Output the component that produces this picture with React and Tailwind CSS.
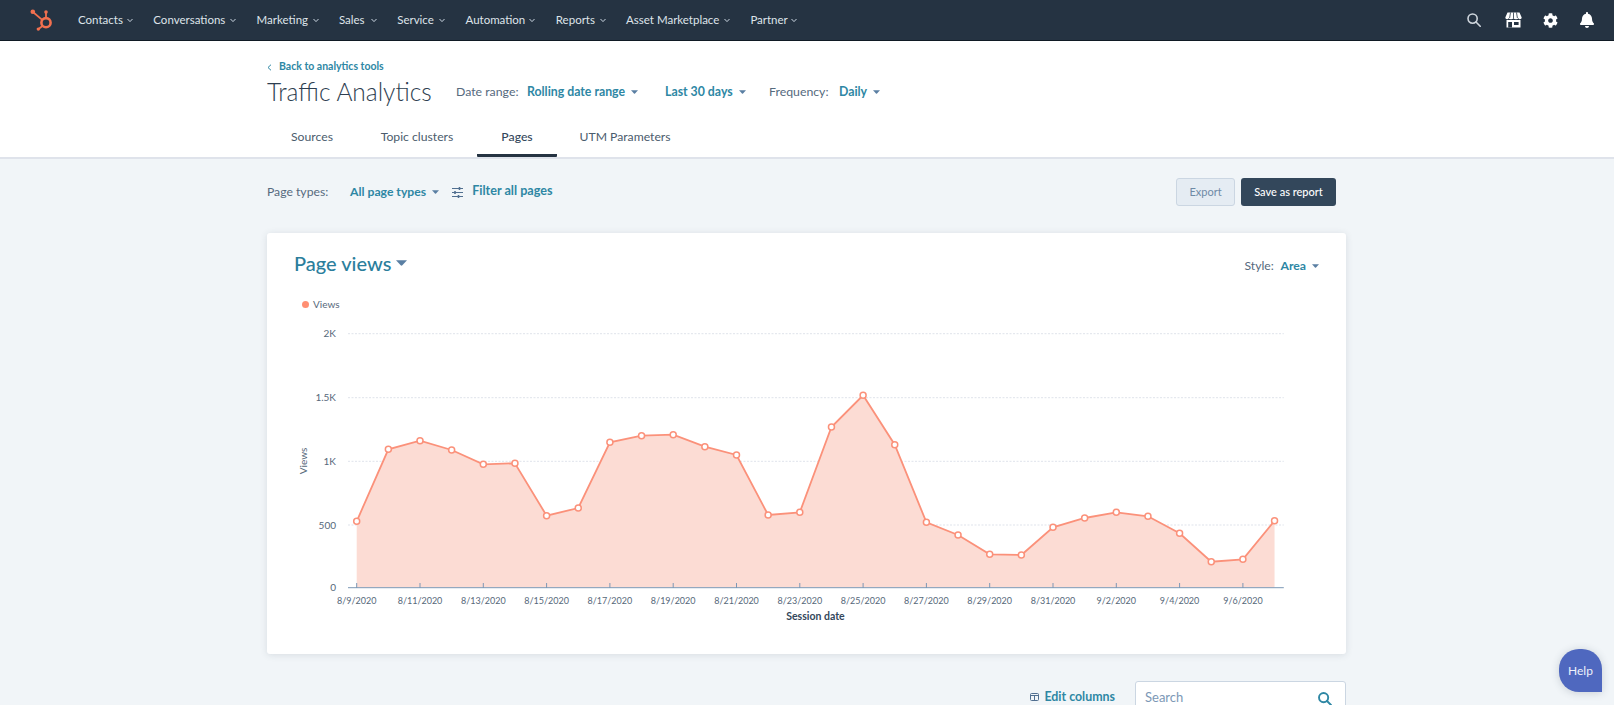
import React from "react";
import { FaCog, FaBell } from "react-icons/fa";

const nav = [
  ["Contacts", "w-[44px]"],
  ["Conversations", "w-[72px]"],
  ["Marketing", "w-[51px]"],
  ["Sales", "w-[27px]"],
  ["Service", "w-[37px]"],
  ["Automation", "w-[59px]"],
  ["Reports", "w-[39px]"],
  ["Asset Marketplace", "w-[93px]"],
  ["Partner", "w-[36px]"],
];

const tabs = [
  ["Sources", "w-[90px]"],
  ["Topic clusters", "w-[120px]"],
  ["Pages", "w-[80px]"],
  ["UTM Parameters", "w-[136px]"],
];

const ys = [521.3,449.3,440.7,450,464.3,463.3,515.7,508,442.3,435.7,434.7,446.7,455,515,512.3,427,395.3,444.7,522.3,535,554.3,555,527.3,518,512.3,516.3,533.3,561.7,559.3,520.7];
const pts = ys.map((y, i) => [356.7 + 31.65 * i, y]);
const line = pts.map((p) => p.join(",")).join(" ");
const area = `356.7,587.5 ${line} ${pts[29][0]},587.5`;
const xLabels = ["8/9/2020","8/11/2020","8/13/2020","8/15/2020","8/17/2020","8/19/2020","8/21/2020","8/23/2020","8/25/2020","8/27/2020","8/29/2020","8/31/2020","9/2/2020","9/4/2020","9/6/2020"];
const grid = [[333.7,"2K"],[397.7,"1.5K"],[461.3,"1K"],[525,"500"]];

function Chevron() {
  return (
    <svg width="6" height="5" viewBox="0 0 6 5" className="shrink-0">
      <path d="M0.5 1 L3 3.6 L5.5 1" fill="none" stroke="#cbd6e2" strokeWidth="1" />
    </svg>
  );
}

function Caret({ w = 7, h = 4, color = "#5a7fa3" }) {
  return (
    <svg width={w} height={h} viewBox="0 0 8 4" className="shrink-0">
      <path d="M0 0 H8 L4.6 3.7 Q4 4.2 3.4 3.7 Z" fill={color} />
    </svg>
  );
}

function Logo() {
  return (
    <svg width="24" height="26" viewBox="0 0 24 26" fill="none">
      <circle cx="17" cy="16.2" r="4.6" stroke="#f2704f" strokeWidth="2.6" />
      <path d="M17 11 V6" stroke="#f2704f" strokeWidth="1.8" />
      <circle cx="17" cy="5.6" r="1.8" fill="#f2704f" />
      <path d="M13.2 13.4 L4.5 6" stroke="#f2704f" strokeWidth="1.7" />
      <circle cx="3.8" cy="5.2" r="2.3" fill="#f2704f" />
      <path d="M13.5 19.5 L9.5 22.5" stroke="#f2704f" strokeWidth="1.7" />
      <circle cx="9.3" cy="22.6" r="1.7" fill="#f2704f" />
    </svg>
  );
}

function StoreIcon() {
  return (
    <svg width="17" height="16" viewBox="0 0 17 16">
      <path d="M2.5 0.5 H14.5 L16.7 5.6 Q16.7 7.2 15 7.2 Q13.4 7.2 13.3 6 Q13 7.2 11 7.2 Q9 7.2 8.5 6 Q8 7.2 6 7.2 Q4 7.2 3.7 6 Q3.6 7.2 2 7.2 Q0.3 7.2 0.3 5.6 Z" fill="#fff" />
      <path d="M5.5 0.5 L4.6 6 M8.5 0.5 V6 M11.5 0.5 L12.4 6" stroke="#253342" strokeWidth="0.8" />
      <path d="M1.5 8 H15.5 V15.5 H1.5 Z" fill="#fff" />
      <path d="M3.2 10 H7 V15.5 H3.2 Z M9 10 H13.6 V13 H9 Z" fill="#253342" />
    </svg>
  );
}

function Dropdown({ children, className = "" }) {
  return (
    <span className={`flex items-center gap-[6px] font-bold text-[#2e87a4] ${className}`}>
      {children}
      <Caret />
    </span>
  );
}

function SearchIcon({ size = 14, color = "#cfd6dd", width = 1.6 }) {
  return (
    <svg width={size} height={size} viewBox="0 0 14 14" fill="none" stroke={color} strokeWidth={width}>
      <circle cx="5.6" cy="5.6" r="4.6" />
      <path d="M9 9 L13.2 13.2" strokeLinecap="round" />
    </svg>
  );
}

export default function App() {
  return (
    <div className="relative h-[705px] w-full overflow-hidden bg-[#f1f5f8] font-['Lato',sans-serif] text-[#33475b]">
      <header className="flex h-[41px] items-center border-b border-[#101a24] bg-[#253342] pl-[29px] text-[11.5px] text-[#dfe4ea]">
        <span className="mr-[25px] flex w-[24px] -translate-y-[0.5px]"><Logo /></span>
        <nav className="flex items-center gap-[20.3px]">
          {nav.map(([label, w]) => (
            <span key={label} className="flex items-center gap-[5px]">
              <span className={`${w} whitespace-nowrap`}>{label}</span>
              <Chevron />
            </span>
          ))}
        </nav>
        <div className="ml-auto flex items-center pr-[19px]">
          <SearchIcon />
          <span className="ml-[24px] flex"><StoreIcon /></span>
          <FaCog className="ml-[21px] text-[15px] text-white" />
          <FaBell className="ml-[21px] text-[16px] text-white" />
        </div>
      </header>

      <section className="border-b-2 border-[#dfe3eb] bg-white pl-[267px] pt-[18px]">
        <div className="flex h-[16px] items-center gap-[6px] text-[10.5px] font-bold text-[#2e87a4]">
          <svg width="5" height="7" viewBox="0 0 5 7"><path d="M4 0.7 L1 3.5 L4 6.3" fill="none" stroke="#2e87a4" strokeWidth="1" /></svg>
          <span className="ml-[1px]">Back to analytics tools</span>
        </div>
        <div className="flex h-[34px] items-center text-[12.3px]">
          <h1 className="w-[189px] text-[24.5px] font-light leading-none text-[#2d3e50]">Traffic Analytics</h1>
          <span className="w-[71px] text-[#566a7e]">Date range:</span>
          <Dropdown className="w-[138px]">Rolling date range</Dropdown>
          <Dropdown className="w-[104px]">Last 30 days</Dropdown>
          <span className="w-[70px] text-[#566a7e]">Frequency:</span>
          <Dropdown>Daily</Dropdown>
        </div>
        <div className="mt-[9px] flex h-[39px] text-[12.2px] text-[#4b5c6d]">
          {tabs.map(([t, w]) => (
            <span
              key={t}
              className={`flex items-center justify-center border-b-[3px] pt-[2px] ${w} ${t === "Pages" ? "rounded-[1px] border-[#253342] font-medium text-[#33475b]" : "border-transparent"}`}
            >
              {t}
            </span>
          ))}
        </div>
      </section>

      <main className="ml-[267px] w-[1079px]">
        <div className="flex items-center pb-[27px] pr-[10px] pt-[19px] text-[12.2px]">
          <span className="w-[83px] text-[#566a7e]">Page types:</span>
          <Dropdown>All page types</Dropdown>
          <svg width="11" height="11" viewBox="0 0 11 11" className="ml-[13px]" stroke="#516f90" strokeWidth="1">
            <path d="M0 1.5 H11 M0 5.5 H11 M0 9.5 H11" />
            <path d="M7.5 0 V3 M3 4 V7 M6.5 8 V11" strokeWidth="1.6" />
          </svg>
          <span className="ml-[9px] -translate-y-[1px] text-[12.6px] font-bold text-[#2e87a4]">Filter all pages</span>
          <button className="ml-auto h-[28px] w-[59px] rounded-[3px] border border-[#cbd6e2] bg-[#e5ecf3] text-[11px] text-[#6f8aa6]">Export</button>
          <button className="ml-[6px] h-[28px] w-[95px] rounded-[3px] bg-[#33475b] text-[11px] font-medium text-white">Save as report</button>
        </div>

        <div className="h-[421px] rounded-[3px] bg-white shadow-[0_1px_7px_rgba(45,62,80,0.13)]">
          <div className="flex h-[57px] items-center justify-between pl-[27px] pr-[27px] pt-[3px]">
            <div className="flex items-center gap-[5px] text-[20px] font-medium text-[#2b7e9c]">
              Page views
              <Caret w={11} h={6} />
            </div>
            <div className="flex items-center pt-[6px] text-[12.2px]">
              <span className="w-[36px] text-[#566a7e]">Style:</span>
              <Dropdown>Area</Dropdown>
            </div>
          </div>
          <div className="flex h-[28px] items-center gap-[4px] pl-[35px] text-[10px] text-[#56687a]">
            <span className="h-[7px] w-[7px] rounded-full bg-[#ff8f73]" />
            Views
          </div>
          <svg viewBox="267 318 1079 310" className="block h-[310px] w-[1079px]" style={{ fontFamily: "Lato, sans-serif" }}>
            {grid.map(([y, l]) => (
              <g key={l}>
                <line x1="348" x2="1283.8" y1={y} y2={y} stroke="#dfe3eb" strokeWidth="1" strokeDasharray="2 1.5" />
                <text x="336" y={y + 3.5} textAnchor="end" fontSize="10" fill="#56687a">{l}</text>
              </g>
            ))}
            <text x="336" y="591" textAnchor="end" fontSize="10" fill="#56687a">0</text>
            <text x="0" y="0" transform="translate(306.5 461) rotate(-90)" textAnchor="middle" fontSize="10" fill="#56687a">Views</text>
            <polygon points={area} fill="#fcdcd4" />
            <line x1="348" x2="1283.8" y1="587.7" y2="587.7" stroke="#7c98b6" strokeWidth="1" />
            {xLabels.map((l, i) => {
              const x = 356.7 + 63.3 * i;
              return (
                <g key={l}>
                  <line x1={x} x2={x} y1="583" y2="588" stroke="#7c98b6" strokeWidth="1" />
                  <text x={x} y="603.5" textAnchor="middle" fontSize="9" fill="#56687a">{l}</text>
                </g>
              );
            })}
            <text x="815.5" y="619.5" textAnchor="middle" fontSize="10.5" fontWeight="700" fill="#33475b">Session date</text>
            <polyline points={line} fill="none" stroke="#fb917a" strokeWidth="1.8" />
            {pts.map(([x, y], i) => (
              <circle key={i} cx={x} cy={y} r="3" fill="#fff" stroke="#fb917a" strokeWidth="1.5" />
            ))}
          </svg>
        </div>

        <div className="flex items-start justify-end pt-[27px]">
          <span className="mr-[20px] mt-[7px] flex items-center gap-[5px] text-[12.4px] font-bold text-[#2e87a4]">
            <svg width="9" height="8" viewBox="0 0 9 8">
              <rect x="0.5" y="0.5" width="8" height="7" rx="1" fill="none" stroke="#516f90" />
              <path d="M0 2.5 H9 M4.5 2 V8" stroke="#516f90" />
            </svg>
            Edit columns
          </span>
          <div className="flex h-[40px] w-[211px] items-start justify-between rounded-[3px] border border-[#cbd6e2] bg-white pl-[9px] pr-[13px] pt-[7px] text-[13px] leading-[16px] text-[#7c98b6]">
            Search
            <span className="pt-[3px]"><SearchIcon size={14} color="#2e87a4" width={1.9} /></span>
          </div>
        </div>
      </main>

      <div className="absolute left-[1559px] top-[649px] flex h-[43px] w-[43px] items-center justify-center rounded-[20px] rounded-br-none bg-[#4f68bf] text-[12px] text-[#eef1fa] shadow-[0_1px_8px_rgba(45,62,80,0.2)]">
        Help
      </div>
    </div>
  );
}
